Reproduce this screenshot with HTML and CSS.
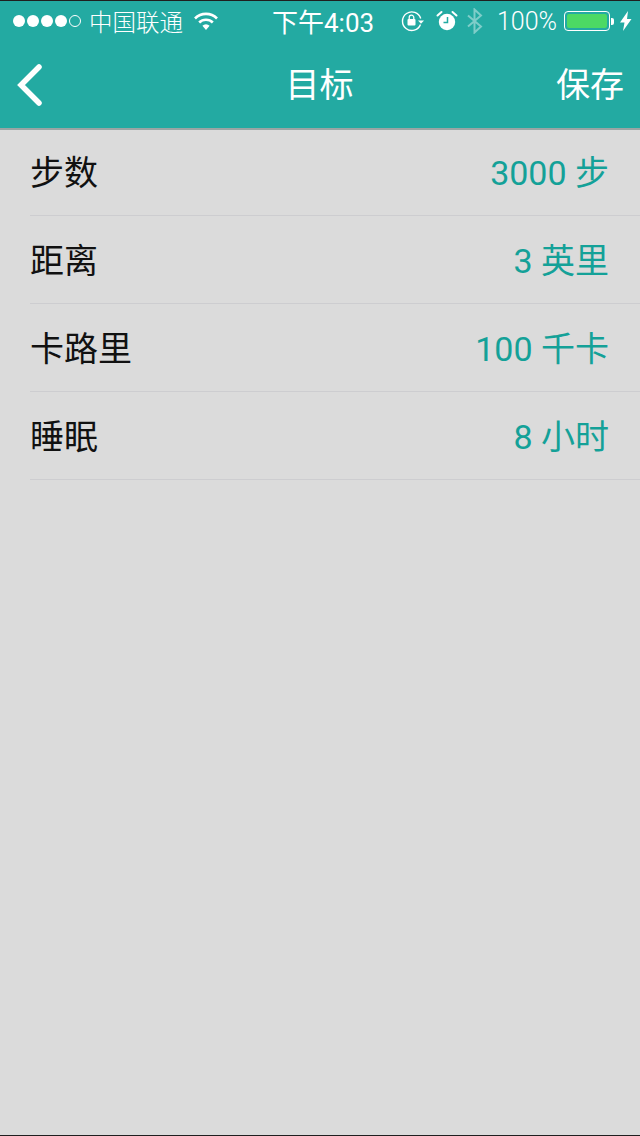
FILE: index.html
```html
<html>
<head>
  <meta charset="utf-8">
  <link rel="stylesheet" href="styles.css">
</head>
<body>
  <div id="phone">
    <div id="header">
      <div id="status">
        <div class="status-left">
          <span class="dots"><i></i><i></i><i></i><i></i><i class="empty"></i></span>
          <span class="carrier">中国联通</span>
          <svg class="wifi" width="26" height="20" viewBox="0 0 26 20">
            <path d="M2 7.5a15.5 15.5 0 0 1 22 0" fill="none" stroke="#fff" stroke-width="2.6"/>
            <path d="M6.2 11.5a9.6 9.6 0 0 1 13.6 0" fill="none" stroke="#fff" stroke-width="2.6"/>
            <path d="M13 19l-3.6-4.2a5 5 0 0 1 7.2 0z" fill="#fff"/>
          </svg>
        </div>
        <div class="time">下午4:03</div>
        <div class="status-right">
          <svg class="lock" width="24" height="22" viewBox="0 0 24 22">
            <path d="M19.5 14.5a9.3 9.3 0 1 1 .2-6" fill="none" stroke="#fff" stroke-width="1.4"/>
            <path d="M17 10.5h6l-3 3.2z" fill="#fff"/>
            <rect x="6.5" y="9" width="8" height="6.5" rx="1" fill="#fff"/>
            <path d="M8.2 9V7.5a2.3 2.3 0 0 1 4.6 0V9" fill="none" stroke="#fff" stroke-width="1.3"/>
          </svg>
          <svg class="alarm" width="22" height="22" viewBox="0 0 22 22">
            <circle cx="11" cy="12" r="8.2" fill="#fff"/>
            <path d="M11.5 7v5.5H7.5" fill="none" stroke="#23aaa2" stroke-width="1.5"/>
            <path d="M1.5 5.5L5.500 2M20.500 5.500L16.500 2" stroke="#fff" stroke-width="2" stroke-linecap="round"/>
          </svg>
          <svg class="bt" width="18" height="26" viewBox="0 0 18 26">
            <path d="M2 7.5l13 11-6.5 6V1.500l6.500 6-13 11" fill="none" stroke="#fff" stroke-opacity="0.42" stroke-width="2"/>
          </svg>
          <span class="battery-text">100%</span>
          <span class="battery"><span class="battery-fill"></span></span>
          <span class="battery-tip"></span>
          <svg class="bolt" width="12" height="20" viewBox="0 0 12 20">
            <path d="M8 0L0 11.500h4.500L3 20l8.500-12H7z" fill="#fff"/>
          </svg>
        </div>
      </div>
      <div id="nav">
        <svg class="back" width="28" height="44" viewBox="0 0 28 44">
          <path d="M24 4L6 22l18 18" fill="none" stroke="#fff" stroke-width="5.500" stroke-linecap="round"/>
        </svg>
        <div class="title">目标</div>
        <div class="save">保存</div>
      </div>
    </div>
    <ul id="goals">
      <li><span class="name">步数</span><span class="value">3000 步</span></li>
      <li><span class="name">距离</span><span class="value">3 英里</span></li>
      <li><span class="name">卡路里</span><span class="value">100 千卡</span></li>
      <li><span class="name">睡眠</span><span class="value">8 小时</span></li>
    </ul>
  </div>
</body>
</html>
```

FILE: styles.css
```css
html, body {
  margin: 0;
  padding: 0;
  width: 640px;
  height: 1136px;
  overflow: hidden;
}

body {
  font-family: Roboto, "Noto Sans CJK SC", sans-serif;
  background-color: #1f1f1f;
}

#phone {
  display: flex;
  flex-direction: column;
  height: 1134px;
  margin-top: 1px;
  background-color: #dbdbdb;
}

#header {
  position: relative;
  background-color: #23aaa2;
  color: white;
  box-shadow: 0 2px 0 #9aa5a4;
}

#status {
  display: flex;
  align-items: center;
  height: 40px;
  padding: 0 8px 0 13px;
  font-size: 23.5px;
  font-weight: 300;
}

.status-left {
  display: flex;
  align-items: center;
  width: 259px;
}

.dots {
  display: flex;
  gap: 2px;
}

.dots i {
  display: block;
  width: 12px;
  height: 12px;
  border-radius: 50%;
  background-color: white;
}

.dots i.empty {
  box-sizing: border-box;
  background: none;
  border: 1px solid white;
}

.carrier {
  margin-left: 8px;
}

.wifi {
  margin-left: 10px;
}

.time {
  font-size: 26px;
  font-weight: 400;
  white-space: nowrap;
  padding-bottom: 2px;
}

.status-right {
  display: flex;
  align-items: center;
  margin-left: auto;
}

.alarm {
  margin-left: 11px;
}

.bt {
  margin-left: 8px;
}

.battery-text {
  margin-left: 13px;
  font-size: 25px;
  font-weight: 300;
}

.battery {
  box-sizing: border-box;
  display: block;
  width: 46px;
  height: 20px;
  margin-left: 7px;
  padding: 2px;
  border: 1px solid white;
  border-radius: 4px;
}

.battery-fill {
  display: block;
  height: 100%;
  border-radius: 2px;
  background-color: #4cd964;
}

.battery-tip {
  width: 3px;
  height: 7px;
  margin-left: 1px;
  border-radius: 0 2px 2px 0;
  background-color: white;
}

.bolt {
  margin-left: 6px;
}

#nav {
  display: grid;
  grid-template-columns: 1fr auto 1fr;
  align-items: center;
  height: 87px;
  padding: 0 16px 0 15px;
}

.title,
.save {
  font-size: 34px;
  font-weight: 400;
  padding-bottom: 4px;
}

.save {
  justify-self: end;
}

#goals {
  list-style-type: none;
  margin: 0;
  padding: 0 0 0 30px;
}

#goals li {
  display: flex;
  align-items: center;
  justify-content: space-between;
  box-sizing: border-box;
  height: 88px;
  padding: 0 31px 2px 0;
  border-bottom: 1px solid #cdcdd0;
}

.name {
  font-size: 34px;
  font-weight: 400;
  color: #111;
}

.value {
  font-size: 34px;
  font-weight: 400;
  color: #14a198;
}
```
